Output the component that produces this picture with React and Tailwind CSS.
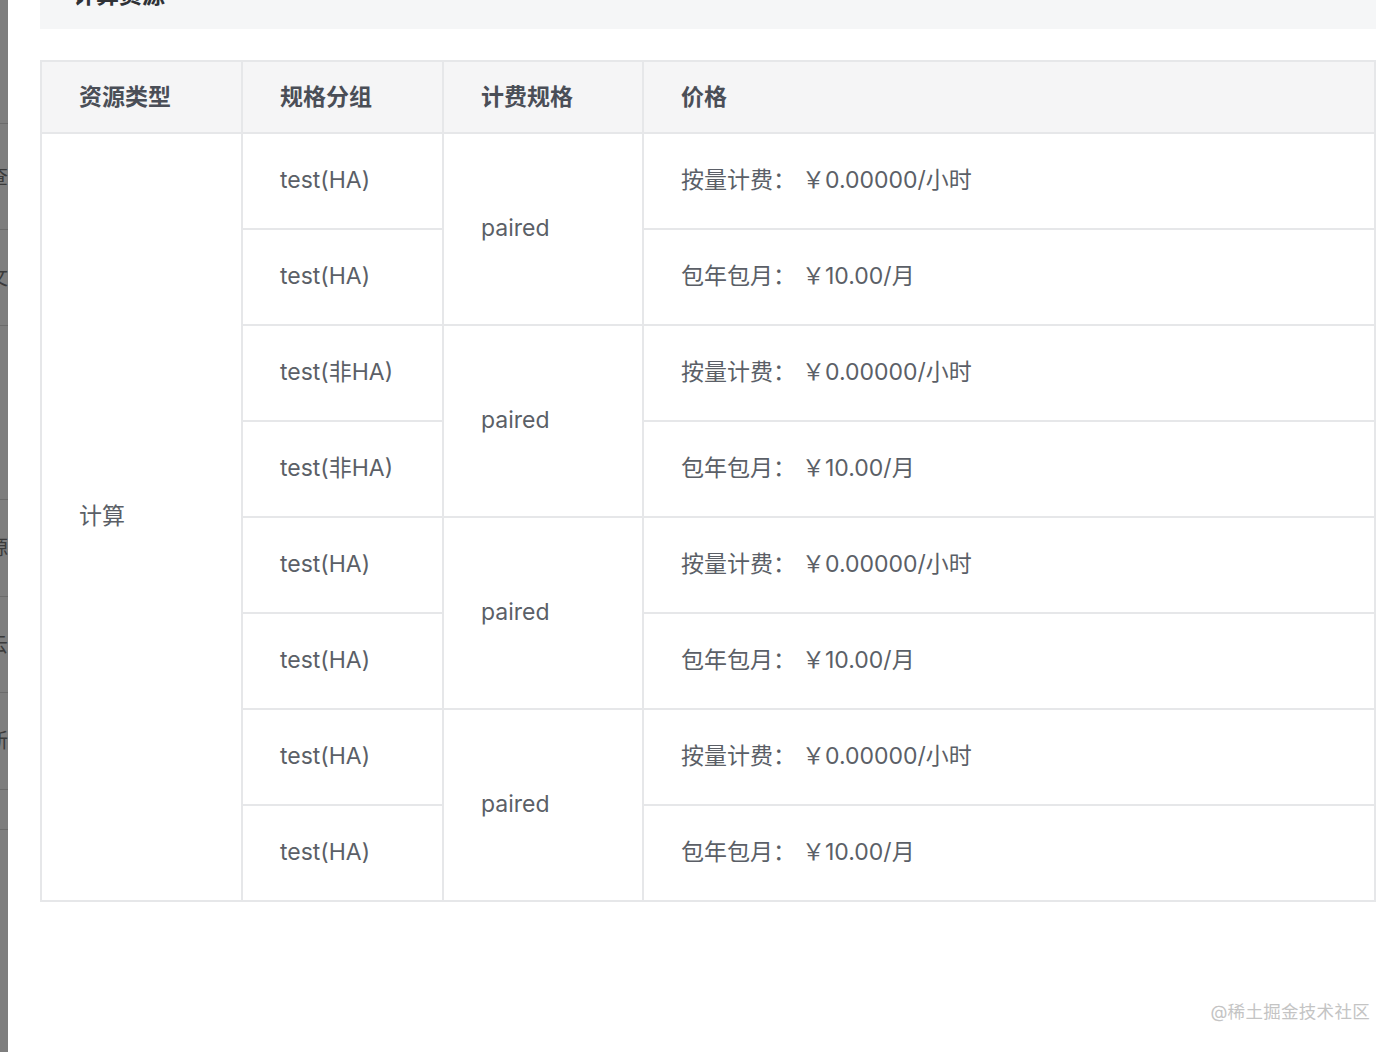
const rows = [
  { group: 'test(HA)', spec: 'paired' },
  { group: 'test(非HA)', spec: 'paired' },
  { group: 'test(HA)', spec: 'paired' },
  { group: 'test(HA)', spec: 'paired' },
];

// 背后页面被遮罩后露出的一截
const backdrop = [
  { h: 124, ch: '' },
  { h: 106, ch: '查' },
  { h: 96, ch: '文' },
  { h: 174, ch: '' },
  { h: 97, ch: '源' },
  { h: 96, ch: '云' },
  { h: 97, ch: '新' },
  { h: 40, ch: '' },
];

const cell = 'border-2 border-[#e6e7e9] text-left align-middle pl-[37px]';

export default function App() {
  return (
    <div className="flex h-[1052px] w-full bg-white overflow-hidden"
      style={{ fontFamily: 'Inter, "Noto Sans CJK SC", sans-serif' }}>
      <div className="w-[8px] flex-shrink-0 bg-[#7e7e7e] flex flex-col overflow-hidden">
        {backdrop.map((b, i) => (
          <div key={i} className="flex items-center border-b border-[#6c6c6c] flex-shrink-0" style={{ height: b.h }}>
            <span className="-ml-[12px] text-[20px] leading-none text-[#3a3a3a]">{b.ch}</span>
          </div>
        ))}
      </div>

      <div className="flex-1 pl-[32px] pr-[22px] flex flex-col">
        <div className="h-[29px] bg-[#f5f6f7] flex pl-[33px]">
          <span className="-mt-[16px] text-[23px] leading-[23px] font-bold text-[#2f3237]">计算资源</span>
        </div>

        <table className="mt-[31px] w-full table-fixed border-collapse">
          <colgroup>
            <col className="w-[201px]" />
            <col className="w-[201px]" />
            <col className="w-[200px]" />
            <col />
          </colgroup>
          <thead>
            <tr className="h-[72px] bg-[#f5f5f6]">
              {['资源类型', '规格分组', '计费规格', '价格'].map((t) => (
                <th key={t} className={`${cell} text-[23px] font-semibold text-[#4a4e57]`}>{t}</th>
              ))}
            </tr>
          </thead>
          <tbody className="text-[23px] text-[#5b5f67]">
            {rows.map((r, i) => (
              <>
                <tr key={`a${i}`} className="h-[96px]">
                  {i === 0 && <td rowSpan={8} className={`${cell} pb-[1px]`}>计算</td>}
                  <td className={`${cell} pb-[1px]`}>{r.group}</td>
                  <td rowSpan={2} className={`${cell} pb-[1px]`}>{r.spec}</td>
                  <td className={`${cell} pb-[1px]`}>按量计费：<span className="ml-[6px]">￥0.00000/小时</span></td>
                </tr>
                <tr key={`b${i}`} className="h-[96px]">
                  <td className={`${cell} pb-[1px]`}>{r.group}</td>
                  <td className={`${cell} pb-[1px]`}>包年包月：<span className="ml-[6px]">￥10.00/月</span></td>
                </tr>
              </>
            ))}
          </tbody>
        </table>

        <div className="flex justify-end mt-[97px] pr-[6px]">
          <span className="text-[17.5px] text-[#c4c4c4] tracking-[0.3px]">@稀土掘金技术社区</span>
        </div>
      </div>
    </div>
  );
}
